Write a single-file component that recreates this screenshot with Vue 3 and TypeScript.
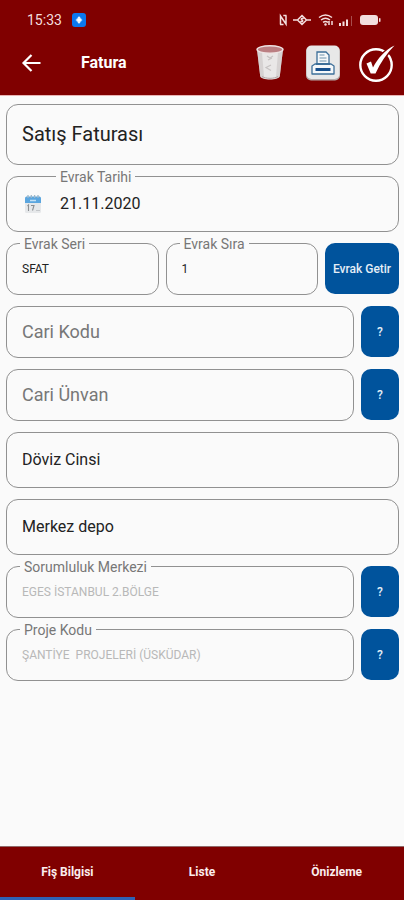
<script setup lang="ts">
import { ref } from 'vue'

interface LookupField {
  id: string
  label: string
  value: string
  disabled: boolean
}

const documentType = ref('Satış Faturası')
const documentDate = ref('21.11.2020')
const series = ref('SFAT')
const order = ref('1')
const currency = ref('Döviz Cinsi')
const warehouse = ref('Merkez depo')

const accounts = ref([
  { id: 'cari-kodu', label: 'Cari Kodu', value: '' },
  { id: 'cari-unvan', label: 'Cari Ünvan', value: '' },
])

const lookups = ref<LookupField[]>([
  { id: 'sorumluluk', label: 'Sorumluluk Merkezi', value: 'EGES İSTANBUL 2.BÖLGE', disabled: true },
  { id: 'proje', label: 'Proje Kodu', value: 'ŞANTİYE  PROJELERİ (ÜSKÜDAR)', disabled: true },
])

const tabs = ['Fiş Bilgisi', 'Liste', 'Önizleme']
const activeTab = ref(0)
</script>

<template>
  <div class="screen">
    <header class="header">
      <div class="status">
        <span class="clock">15:33</span>
        <svg width="14" height="14" viewBox="0 0 14 14" aria-hidden="true">
          <rect width="14" height="14" rx="3" fill="#0b78f0" />
          <path d="M7 3 10.500 7 7 11 3.500 7Z" fill="#a9d5ff" />
          <path d="M7 4v6M5 7h4" stroke="#fff" stroke-width="1.4" />
        </svg>
        <svg class="indicators" width="106" height="14" viewBox="0 0 106 14" fill="none" aria-hidden="true">
          <g stroke="#f3dede" stroke-width="1.5">
            <path d="M2.500 11.500V3L8 11V2.500M5.300 2.500H8.500M2 11.500h3.500" />
            <path d="M15 7h4M29 7h4M24 2.500 28.500 7 24 11.500 19.500 7Z" />
            <path d="M25.800 5.500c-2-1-3.300.700-1.800 1.500s.500 2.500-1.800 1.500" />
            <path d="M41 4.500c4-3 9-3 13 0M43 7c3-2.300 6-2.300 9 0M45 9.400c2-1.300 3-1.300 5 0M51 8v4M54 8v4" />
          </g>
          <g fill="#f3dede">
            <circle cx="47.500" cy="11.500" r="1.200" />
            <path d="M61 10h2v3h-2zM64.500 8.500h2V13h-2zM68 6.500h2V13h-2z" />
            <path d="M73 3h1v10h-1z" opacity=".35" />
            <rect x="82" y="2" width="18" height="10" rx="3" />
            <rect x="101" y="5" width="1.500" height="4" rx=".7" />
          </g>
        </svg>
      </div>
      <div class="appbar">
        <button class="icon-button" type="button" aria-label="Geri">
          <svg width="20" height="20" viewBox="0 0 20 20" fill="none" stroke="#fff" stroke-width="2.200">
            <path d="M19.500 10H3M10.500 2 2.500 10l8 8" />
          </svg>
        </button>
        <h1 class="title">Fatura</h1>
        <div class="actions">
          <button class="icon-button" type="button" aria-label="Sil">
            <svg width="28" height="36" viewBox="0 0 28 36">
              <path d="M1 4.500 4.200 31c.3 4.600 19.300 4.600 19.600 0L27 4.500Z" fill="#e9e7e7" />
              <path d="M1 4.500 4.200 31c.1 1.300 1.600 2.300 4 2.900L6 7ZM27 4.500 23.800 31c-.1 1.300-1.600 2.300-4 2.900L22 7Z" fill="#c9c5c5" opacity=".6" />
              <ellipse cx="14" cy="4.500" rx="13" ry="3.700" fill="#bb7f83" stroke="#eee4e4" stroke-width="1.400" />
              <path d="m11 11 3 2 3-2M12 15l4-2M15 20l-5 2.500 5 3" fill="none" stroke="#c6c2c2" stroke-width="1.200" />
              <path d="M6 31.500c4 2.400 12 2.400 16 0" fill="none" stroke="#b1a6a6" />
            </svg>
          </button>
          <button class="icon-button" type="button" aria-label="Yazdır">
            <svg width="34" height="36" viewBox="0 0 34 36" fill="none">
              <rect y="1" width="34" height="34.500" rx="5" fill="#b5aaa9" />
              <rect x=".5" y=".5" width="33" height="33.500" rx="5" fill="#e8e8e8" />
              <path d="M11 20V7h9l3 3v10" fill="#f5f8fa" stroke="#3d6f99" stroke-width="1.300" />
              <path d="M13.500 10h5M13.500 13h7M13.500 16h7" stroke="#6f91ab" stroke-width="1.200" />
              <path d="M9 19h16l3 2v8H6v-8Z" fill="#f5f8fa" stroke="#3d6f99" stroke-width="1.300" stroke-linejoin="round" />
              <path d="M10 19h14" stroke="#3d6f99" stroke-width="2" />
              <path d="M9.500 24.500h15" stroke="#164f8c" stroke-width="3" />
            </svg>
          </button>
          <button class="icon-button confirm" type="button" aria-label="Onayla">
            <svg width="38" height="38" viewBox="0 0 38 38">
              <circle cx="18" cy="21" r="15.700" fill="none" stroke="#fff" stroke-width="2.400" />
              <path d="M8.500 19.500 13 17.500l2 6C20 14 27 6 36.500 1.500 29 9 22.500 18.500 17.500 29.500h-4.800Z" fill="#fff" stroke="#800000" stroke-width="3" paint-order="stroke" />
            </svg>
          </button>
        </div>
      </div>
    </header>

    <main class="form">
      <div class="field type-field">
        <select v-model="documentType" class="control type" aria-label="Evrak tipi">
          <option>Satış Faturası</option>
        </select>
      </div>

      <div class="field medium date-field">
        <label class="caption" for="tarih">Evrak Tarihi</label>
        <svg class="calendar" width="16" height="18" viewBox="0 0 16 18" aria-hidden="true">
          <rect y="2" width="16" height="16" rx="1.500" fill="#e6e8ea" />
          <path d="M0 8V3.500C0 2 1 1.500 2 1.500h12c1 0 2 .5 2 2V8Z" fill="#5ba6df" />
          <path d="M3 0v3M6.300 0v3M9.600 0v3M13 0v3" stroke="#9fb7c8" stroke-width="1.300" />
          <path d="M5 5.500h6" stroke="#c3e1f6" stroke-width="1.500" />
          <path d="m2.500 11 1-1v6M6 10.500h3l-1.500 5" fill="none" stroke="#8b8f93" stroke-width="1.100" />
          <path d="M11 15.500h4" stroke="#c4c7ca" />
        </svg>
        <input id="tarih" v-model="documentDate" class="control" type="text" />
      </div>

      <div class="row">
        <div class="field">
          <label class="caption" for="seri">Evrak Seri</label>
          <input id="seri" v-model="series" class="control small" type="text" />
        </div>
        <div class="field">
          <label class="caption" for="sira">Evrak Sıra</label>
          <input id="sira" v-model="order" class="control small" type="text" />
        </div>
        <button class="action fetch" type="button">Evrak Getir</button>
      </div>

      <div v-for="account in accounts" :key="account.id" class="row">
        <div class="field">
          <input
            :id="account.id"
            v-model="account.value"
            class="control large"
            type="text"
            :placeholder="account.label"
            :aria-label="account.label"
          />
        </div>
        <button class="action lookup" type="button" :aria-label="account.label + ' ara'">?</button>
      </div>

      <div class="field medium">
        <select v-model="currency" class="control" aria-label="Döviz cinsi">
          <option>Döviz Cinsi</option>
        </select>
      </div>
      <div class="field medium">
        <select v-model="warehouse" class="control" aria-label="Depo">
          <option>Merkez depo</option>
        </select>
      </div>

      <div v-for="item in lookups" :key="item.id" class="row">
        <div class="field">
          <label class="caption" :for="item.id">{{ item.label }}</label>
          <input :id="item.id" v-model="item.value" class="control small" type="text" :disabled="item.disabled" />
        </div>
        <button class="action lookup" type="button" :aria-label="item.label + ' ara'">?</button>
      </div>
    </main>

    <nav class="tabs">
      <button
        v-for="(tab, index) in tabs"
        :key="tab"
        type="button"
        class="tab"
        :class="{ active: index === activeTab }"
        @click="activeTab = index"
      >
        {{ tab }}
      </button>
    </nav>
  </div>
</template>

<style>
body {
  margin: 0;
  background: #fafafa;
}
</style>

<style scoped>
.screen {
  display: flex;
  flex-direction: column;
  min-height: 100vh;
  background: #fafafa;
  color: #222;
  font-family: Roboto, 'Liberation Sans', sans-serif;
}

button,
input,
select {
  box-sizing: border-box;
  margin: 0;
  border: 0;
  font-family: inherit;
}

.header {
  background: #800000;
  color: #fff;
  border-bottom: 1px solid #e8b4b4;
}

.status {
  display: flex;
  align-items: center;
  gap: 10px;
  padding: 12px 20px 12px 27px;
}

.clock {
  color: #f3dede;
  font-size: 14px;
  line-height: 16px;
}

.indicators {
  margin-left: auto;
}

.appbar {
  display: flex;
  align-items: center;
  padding: 4px 8px 13px 21px;
}

.icon-button {
  display: flex;
  padding: 0;
  background: none;
  cursor: pointer;
}

.title {
  margin: 0 0 0 40px;
  font-size: 16px;
  line-height: 24px;
  font-weight: 700;
}

.actions {
  display: flex;
  align-items: center;
  gap: 22px;
  margin-left: auto;
}

.confirm {
  margin-left: -4px;
}

.form {
  display: flex;
  flex: 1;
  flex-direction: column;
  gap: 11px;
  padding: 8px 5px 11px 6px;
}

.row {
  display: flex;
  gap: 7px;
}

.field {
  position: relative;
  box-sizing: border-box;
  display: flex;
  flex: 1;
  align-items: center;
  min-width: 0;
  height: 52px;
  border: 1px solid #919191;
  border-radius: 12px;
}

.form > .field {
  flex: none;
}

.medium {
  height: 56px;
}

.type-field {
  height: 61px;
}

.caption {
  position: absolute;
  top: -8px;
  left: 13px;
  padding: 0 4px;
  background: #fafafa;
  color: #777;
  font-size: 14px;
  line-height: 16px;
}

.date-field .caption {
  left: 49px;
}

.calendar {
  flex: none;
  margin-left: 18px;
}

.control {
  flex: 1;
  width: 100%;
  min-width: 0;
  height: 100%;
  padding: 0 15px 1px;
  appearance: none;
  outline: none;
  background: transparent;
  color: #222;
  font-size: 16px;
}

.date-field .control {
  padding-left: 19px;
}

.type {
  font-size: 20px;
}

.large {
  font-size: 18px;
}

.small {
  font-size: 12px;
}

.control::placeholder {
  color: #777;
  opacity: 1;
}

.control:disabled {
  color: #b8b8b8;
}

.action {
  height: 51px;
  padding: 0;
  border-radius: 10px;
  background: #00539c;
  color: #e4eef7;
  font-size: 12px;
  font-weight: 500;
  cursor: pointer;
}

.fetch {
  width: 74px;
}

.lookup {
  width: 38px;
}

.tabs {
  display: flex;
  height: 53px;
  border-top: 1px solid #8f6a6a;
  background: #800000;
}

.tab {
  flex: 1;
  padding: 0;
  border-bottom: 3px solid transparent;
  background: none;
  color: #fbeeee;
  font-size: 12px;
  font-weight: 700;
  cursor: pointer;
}

.tab.active {
  border-bottom-color: #2f62b5;
}
</style>
